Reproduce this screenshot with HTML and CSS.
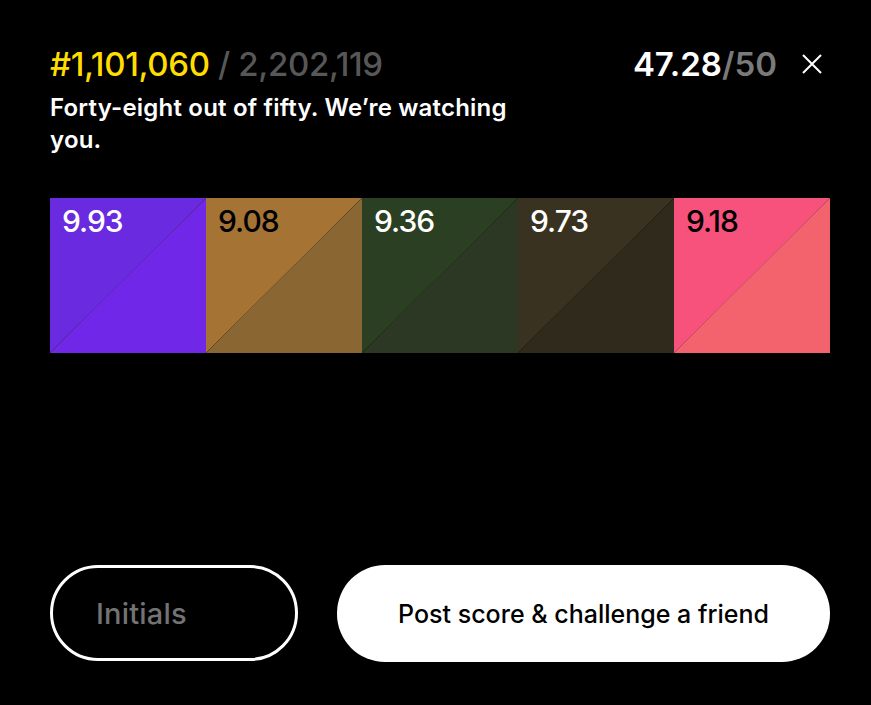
FILE: index.html
```html
<!DOCTYPE html>
<html>
<head>
<meta charset="utf-8">
<link rel="stylesheet" href="styles.css">
</head>
<body>
<div class="page">
  <header class="top">
    <div class="left">
      <div class="rank"><span class="pos">#1,101,060</span> <span class="total">/ 2,202,119</span></div>
      <p class="msg">Forty-eight out of fifty. We’re watching you.</p>
    </div>
    <div class="right">
      <div class="score"><span class="got">47.28</span><span class="max">/50</span></div>
      <button class="close" aria-label="Close">
        <svg width="20" height="20" viewBox="0 0 20 20"><path d="M1 1 L19 19 M19 1 L1 19" stroke="#fff" stroke-width="2" fill="none"/></svg>
      </button>
    </div>
  </header>
  <div class="swatches">
    <div class="sw s1"><span class="num light">9.93</span></div>
    <div class="sw s2"><span class="num dark">9.08</span></div>
    <div class="sw s3"><span class="num light">9.36</span></div>
    <div class="sw s4"><span class="num light">9.73</span></div>
    <div class="sw s5"><span class="num dark">9.18</span></div>
  </div>
  <div class="actions">
    <input class="initials" type="text" placeholder="Initials">
    <button class="post">Post score &amp; challenge a friend</button>
  </div>
</div>
</body>
</html>
```
FILE: styles.css
```css
* { box-sizing: border-box; }
html, body { margin: 0; background: #000; }
body { font-family: Inter, "Noto Sans", sans-serif; color: #fff; }
.page { width: 871px; height: 705px; padding: 38px 49px 0 50px; display: flex; flex-direction: column; }
.top { display: flex; justify-content: space-between; align-items: flex-start; }
.rank { font-size: 33px; font-weight: 500; letter-spacing: -0.35px; line-height: 52px; }
.pos { color: #ffdd00; }
.total { color: #575757; }
.msg { margin: 0; width: 480px; font-size: 24px; font-weight: 600; line-height: 32px; letter-spacing: 0.2px; padding-top: 2px; }
.right { display: flex; align-items: center; gap: 25px; height: 52px; }
.score { font-size: 33px; font-weight: 600; letter-spacing: 0; }
.got { color: #fff; }
.max { color: #7a7a7a; }
.close { background: none; border: 0; padding: 0; width: 20px; height: 20px; display: block; cursor: pointer; }
.close svg { display: block; }
.swatches { display: flex; margin-top: 42px; width: 780px; height: 155px; }
.sw { flex: 1; padding: 7px 12px; }
.num { font-size: 30px; font-weight: 500; letter-spacing: -1px; line-height: 32px; }
.num.light { color: #fff; }
.num.dark { color: #000; }
.s1 { background: linear-gradient(to bottom right, #6a2ae0 calc(50% - 0.5px), #4a2a8a 50%, #7027e8 calc(50% + 0.5px)); }
.s2 { background: linear-gradient(to bottom right, #a57334 calc(50% - 0.5px), #5a4424 50%, #8a6632 calc(50% + 0.5px)); }
.s3 { background: linear-gradient(to bottom right, #2b4022 calc(50% - 0.5px), #1d2818 50%, #2c3824 calc(50% + 0.5px)); }
.s4 { background: linear-gradient(to bottom right, #3a3220 calc(50% - 0.5px), #201c12 50%, #2f2a1c calc(50% + 0.5px)); }
.s5 { background: linear-gradient(to bottom right, #f7527c calc(50% - 0.5px), #b04a60 50%, #f2636e calc(50% + 0.5px)); }
.actions { display: flex; gap: 39px; margin-top: 212px; width: 780px; }
.initials { width: 248px; height: 96px; border: 3px solid #fff; border-radius: 48px; background: #000; color: #fff; font-family: inherit; font-size: 29px; font-weight: 500; padding: 0 0 0 43px; outline: none; letter-spacing: 0.2px; }
.initials::placeholder { color: #737373; }
.post { flex: 1; height: 97px; border: 0; border-radius: 48px; background: #fff; color: #000; font-family: inherit; font-size: 25px; font-weight: 500; letter-spacing: 0; cursor: pointer; }
```
